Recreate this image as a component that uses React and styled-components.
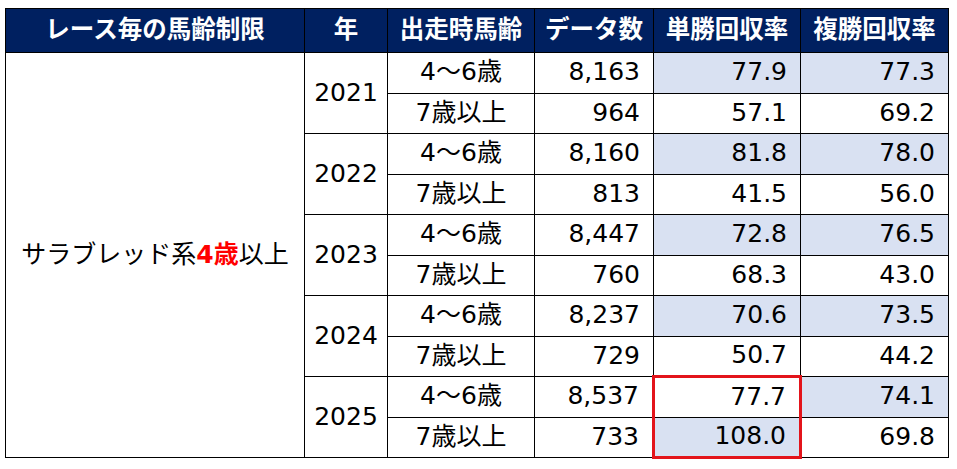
import React from 'react';
import styled, { createGlobalStyle } from 'styled-components';

const GlobalStyle = createGlobalStyle`
  html, body {
    margin: 0;
    padding: 0;
    background: #ffffff;
  }
`;

const Page = styled.div`
  padding: 8px 0 0 5px;
  font-family: "DejaVu Sans", "Noto Sans CJK JP", sans-serif;
  color: #000;
`;

const Table = styled.table`
  width: 943px;
  table-layout: fixed;
  border-collapse: collapse;
  font-size: 25px;
  line-height: 1;
`;

const HeadRow = styled.tr`
  height: 44px;
`;

const HeadCell = styled.th`
  background: #002060;
  color: #ffffff;
  border: 1px solid #000;
  font-family: "DejaVu Sans", "Noto Sans CJK JP", sans-serif;
  font-weight: 700;
  font-size: 24.5px;
  text-align: center;
  padding: 0;
  white-space: nowrap;
`;

const BodyRow = styled.tr`
  height: 40.5px;
`;

const Cell = styled.td`
  border: 1px solid #000;
  border-bottom: ${(p) => (p.$dotted ? '1px dotted #000' : '1px solid #000')};
  background: ${(p) => (p.$shade ? '#d9e1f2' : '#ffffff')};
  text-align: ${(p) => p.$align || 'center'};
  padding: 0 ${(p) => (p.$align === 'right' ? '13px' : '0')} 2px 0;
  vertical-align: middle;
  white-space: nowrap;

  ${(p) =>
    p.$redTop &&
    `
    border-top: 3px solid #e3141b;
    border-left: 3px solid #e3141b;
    border-right: 3px solid #e3141b;
  `}
  ${(p) =>
    p.$redBottom &&
    `
    border-bottom: 3px solid #e3141b;
    border-left: 3px solid #e3141b;
    border-right: 3px solid #e3141b;
  `}
`;

const Accent = styled.span`
  color: #ff0000;
  font-weight: 700;
`;

const columns = [299, 83, 147, 119, 147, 148];
const headers = ['レース毎の馬齢制限', '年', '出走時馬齢', 'データ数', '単勝回収率', '複勝回収率'];

const data = [
  { year: 2021, rows: [['8,163', '77.9', '77.3'], ['964', '57.1', '69.2']] },
  { year: 2022, rows: [['8,160', '81.8', '78.0'], ['813', '41.5', '56.0']] },
  { year: 2023, rows: [['8,447', '72.8', '76.5'], ['760', '68.3', '43.0']] },
  { year: 2024, rows: [['8,237', '70.6', '73.5'], ['729', '50.7', '44.2']] },
  { year: 2025, rows: [['8,537', '77.7', '74.1'], ['733', '108.0', '69.8']] },
];

// which win/place cells are tinted, per year: [young win, young place, old win, old place]
const shading = {
  2021: [true, true, false, false],
  2022: [true, true, false, false],
  2023: [true, true, false, false],
  2024: [true, true, false, false],
  2025: [false, true, true, false],
};

const ages = ['4～6歳', '7歳以上'];

const App = () => (
  <>
    <GlobalStyle />
    <Page>
      <Table>
        <colgroup>
          {columns.map((w, i) => (
            <col key={i} style={{ width: w }} />
          ))}
        </colgroup>
        <thead>
          <HeadRow>
            {headers.map((h) => (
              <HeadCell key={h}>{h}</HeadCell>
            ))}
          </HeadRow>
        </thead>
        <tbody>
          {data.map((group, gi) =>
            group.rows.map((row, ri) => {
              const shade = shading[group.year];
              const last = group.year === 2025;
              return (
                <BodyRow key={`${group.year}-${ri}`}>
                  {gi === 0 && ri === 0 && (
                    <Cell rowSpan={10}>
                      サラブレッド系<Accent>4歳</Accent>以上
                    </Cell>
                  )}
                  {ri === 0 && <Cell rowSpan={2}>{group.year}</Cell>}
                  <Cell $dotted={ri === 0}>{ages[ri]}</Cell>
                  <Cell $dotted={ri === 0} $align="right">
                    {row[0]}
                  </Cell>
                  <Cell
                    $dotted={ri === 0}
                    $align="right"
                    $shade={shade[ri * 2]}
                    $redTop={last && ri === 0}
                    $redBottom={last && ri === 1}
                  >
                    {row[1]}
                  </Cell>
                  <Cell $dotted={ri === 0} $align="right" $shade={shade[ri * 2 + 1]}>
                    {row[2]}
                  </Cell>
                </BodyRow>
              );
            })
          )}
        </tbody>
      </Table>
    </Page>
  </>
);

export default App;
